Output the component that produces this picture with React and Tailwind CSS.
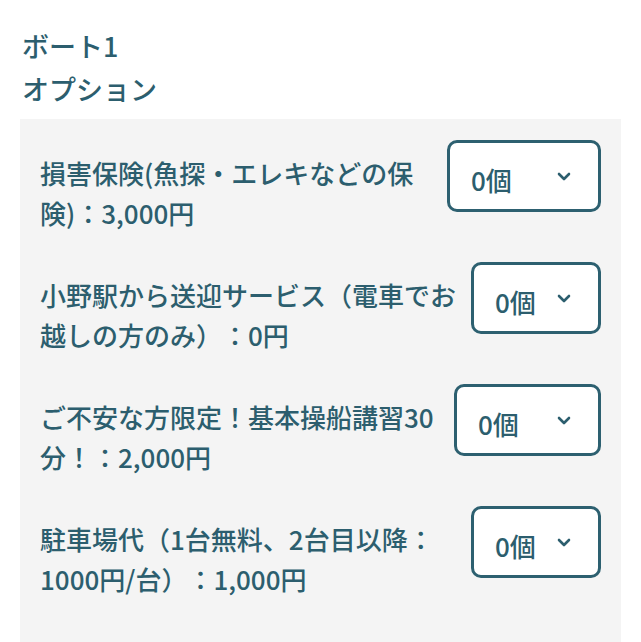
import React from 'react';

const options = [
  { label: '損害保険(魚探・エレキなどの保険)：3,000円', textWidth: 'w-[385px]', boxWidth: 'w-[154px]' },
  { label: '小野駅から送迎サービス（電車でお越しの方のみ）：0円', textWidth: 'w-[428px]', boxWidth: 'w-[130px]' },
  { label: 'ご不安な方限定！基本操船講習30分！：2,000円', textWidth: 'w-[405px]', boxWidth: 'w-[147px]' },
  { label: '駐車場代（1台無料、2台目以降：1000円/台）：1,000円', textWidth: 'w-[420px]', boxWidth: 'w-[130px]' },
];

const Chevron = () => (
  <svg width="14" height="9" viewBox="0 0 14 9" fill="none">
    <polyline points="2,2 7,7 12,2" stroke="#2c5e6e" strokeWidth="2.6" strokeLinecap="round" strokeLinejoin="round" />
  </svg>
);

const QtySelect = ({ width }) => (
  <div
    className={`${width} h-[72px] shrink-0 flex items-center justify-between pl-[21px] pr-[27px] bg-white border-[3px] border-[#2d6070] rounded-[10px]`}
  >
    <span className="pt-[7px] text-[26px] leading-none font-medium">0個</span>
    <Chevron />
  </div>
);

const App = () => {
  return (
    <div
      className="min-h-[642px] bg-white text-[#2c5e6e] pt-[24px] px-[20px] [text-spacing-trim:space-all]"
      style={{ fontFamily: '"Noto Sans CJK JP", "Noto Sans", sans-serif' }}
    >
      <div className="pl-[2px] text-[27px] leading-[43px] font-medium mb-[9px]">
        <div>ボート1</div>
        <div>オプション</div>
      </div>

      <div className="bg-[#f4f4f4] px-[20px] pt-[21px] pb-[60px] flex flex-col gap-[29px]">
        {options.map((opt, i) => (
          <div key={i} className="flex items-start justify-between">
            <div className={`${opt.textWidth} mt-[13px] text-[26px] leading-[40px] font-medium`}>
              {opt.label}
            </div>
            <QtySelect width={opt.boxWidth} />
          </div>
        ))}
      </div>
    </div>
  );
};

export default App;
